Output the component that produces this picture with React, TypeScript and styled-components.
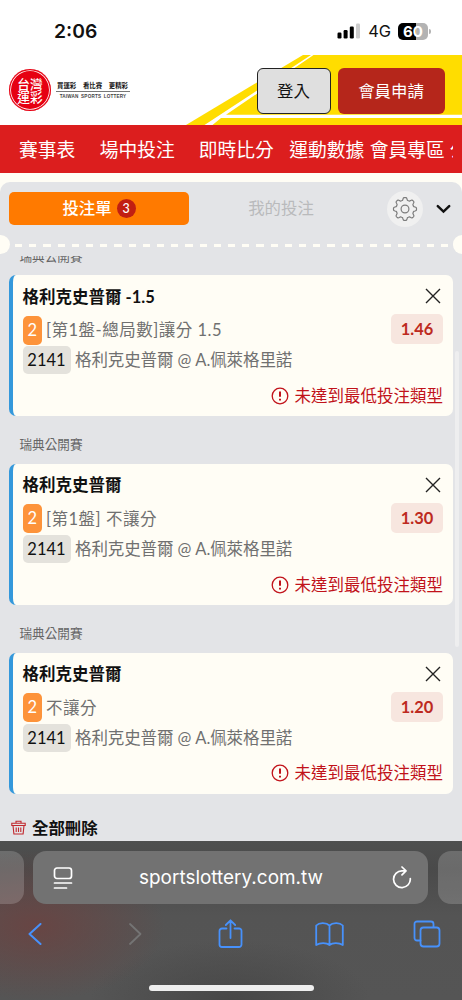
import React from "react";
import styled, { createGlobalStyle } from "styled-components";

const GlobalStyle = createGlobalStyle`
  * { box-sizing: border-box; }
  body {
    margin: 0;
    background: #fffdf5;
    font-family: Lato, "Noto Sans CJK TC", sans-serif;
    color: #111;
  }
  button { font: inherit; color: inherit; border: 0; padding: 0; background: none; }
  svg { display: block; flex: none; }
`;

const Screen = styled.div`
  width: 462px;
  height: 1000px;
  display: flex;
  flex-direction: column;
  overflow: hidden;
`;

const StatusBar = styled.div`
  height: 55px;
  flex: none;
  background: #fff;
  display: flex;
  align-items: center;
  justify-content: space-between;
  padding: 7px 31px 0 54px;
  font-family: Inter, sans-serif;
`;

const Clock = styled.div`
  font-size: 19.3px;
  font-weight: 600;
`;

const StatusIcons = styled.div`
  display: flex;
  align-items: center;
`;

const Network = styled.span`
  font-size: 16.4px;
  margin: 0 7px 0 7px;
`;

const Battery = styled.div`
  width: 30px;
  height: 17px;
  border-radius: 5px;
  background: linear-gradient(90deg, #000 60%, #b3b3b3 60%);
  color: #fff;
  font-size: 15px;
  font-weight: 700;
  line-height: 17px;
  text-align: center;
`;

const BatteryTip = styled.div`
  width: 2px;
  height: 5px;
  margin-left: 1px;
  border-radius: 0 2px 2px 0;
  background: #b3b3b3;
`;

const Header = styled.header`
  position: relative;
  height: 70px;
  flex: none;
  background: #fff;
  display: flex;
  align-items: center;
  padding: 0 17.5px 0 9px;
`;

const Stripes = styled.svg`
  position: absolute;
  right: 0;
  top: 0;
`;

const Emblem = styled.div`
  width: 42px;
  height: 42px;
  flex: none;
  border-radius: 50%;
  background: #e60012;
  box-shadow: inset 0 0 0 1.2px #e60012, inset 0 0 0 2px #fff;
  color: #fff;
  display: flex;
  flex-direction: column;
  align-items: center;
  justify-content: center;
  font-family: "Noto Sans CJK TC", sans-serif;
  font-size: 12.7px;
  line-height: 13px;
  font-weight: 500;
`;

const Slogan = styled.div`
  width: 74px;
  margin-left: 5px;
  text-align: center;
  white-space: nowrap;
`;

const SloganTop = styled.div`
  display: flex;
  justify-content: space-between;
  padding: 0 2px 0 1px;
  font-size: 6.4px;
  line-height: 11px;
  font-weight: 700;
  border-bottom: 1px solid #777;
`;

const SloganBottom = styled.div`
  font-family: "Liberation Sans", sans-serif;
  font-size: 4.6px;
  line-height: 9px;
  letter-spacing: 0.2px;
  word-spacing: 1px;
  font-weight: 700;
  color: #444;
`;

const HeaderActions = styled.div`
  position: relative;
  display: flex;
  gap: 7px;
  margin: 1px 0 0 auto;
`;

const HeaderButton = styled.button<{ $primary?: boolean }>`
  width: ${(p) => (p.$primary ? "107px" : "74px")};
  height: 46px;
  padding-bottom: 2px;
  border-radius: 6px;
  border: ${(p) => (p.$primary ? "0" : "1.3px solid #222")};
  background: ${(p) => (p.$primary ? "#b5261b" : "#dfdfdf")};
  color: ${(p) => (p.$primary ? "#fff" : "#111")};
  font-size: 16.4px;
`;

const Nav = styled.nav`
  height: 48px;
  flex: none;
  background: #dc1e1e;
  display: flex;
  align-items: center;
  margin-bottom: 9px;
  padding: 2px 9px 0 19px;
`;

const NavTrack = styled.div`
  display: flex;
  overflow: hidden;
  white-space: nowrap;
`;

const NavItem = styled.a<{ $gap: number }>`
  flex: none;
  margin-right: ${(p) => p.$gap}px;
  font-size: 18.75px;
  line-height: 28px;
  color: #fff;
`;

const Panel = styled.main`
  height: 659px;
  flex: none;
  border-radius: 10px 10px 0 0;
  background: #e3e4e7;
  display: flex;
  flex-direction: column;
  overflow: hidden;
`;

const Tabs = styled.div`
  height: 53px;
  flex: none;
  display: flex;
  align-items: center;
  padding: 0 10px 0 9px;
`;

const Tab = styled.button<{ $active?: boolean }>`
  width: ${(p) => (p.$active ? "180px" : "184px")};
  height: 33px;
  padding-bottom: 1px;
  border-radius: 5px;
  background: ${(p) => (p.$active ? "#ff7a00" : "transparent")};
  color: ${(p) => (p.$active ? "#fff" : "#b9babc")};
  font-size: 16.4px;
  font-weight: ${(p) => (p.$active ? 500 : 400)};
  line-height: 22px;
  display: flex;
  align-items: center;
  justify-content: center;
  gap: 5px;
`;

const Count = styled.span`
  width: 19px;
  height: 19px;
  margin-top: 1px;
  border-radius: 50%;
  background: #c11f12;
  font-size: 12.5px;
  line-height: 19px;
`;

const Settings = styled.button`
  width: 36px;
  height: 36px;
  margin: 0 13px 0 14px;
  border-radius: 50%;
  background: #f0f0f0;
  display: flex;
  align-items: center;
  justify-content: center;
`;

const Perforation = styled.div`
  height: 21px;
  flex: none;
  display: flex;
  align-items: center;
  justify-content: space-between;
`;

const Notch = styled.div<{ $right?: boolean }>`
  width: 9.5px;
  height: 19px;
  margin-top: -2px;
  border-radius: ${(p) => (p.$right ? "10px 0 0 10px" : "0 10px 10px 0")};
  background: #fffdf5;
`;

const Dashes = styled.div`
  width: 434px;
  height: 2.4px;
  margin: 0 auto 0 5px;
  background: repeating-linear-gradient(90deg, #fffdf5 0 7.2px, transparent 7.2px 14.2px);
`;

const ScrollArea = styled.div`
  position: relative;
  flex: 1;
  overflow: hidden;
`;

const ScrollThumb = styled.div`
  position: absolute;
  right: 3px;
  top: 95px;
  width: 4px;
  height: 296px;
  border-radius: 2px;
  background: #eeeeef;
`;

const List = styled.div`
  margin-top: -28.5px;
  padding: 0 9px;
`;

const League = styled.div`
  height: 47.5px;
  padding: 10px 0 0 10.5px;
  font-size: 12.6px;
  line-height: 37px;
  color: #666;
`;

const Card = styled.article`
  height: 141.25px;
  display: flex;
  flex-direction: column;
  padding: 9px 10px 8.5px 9.5px;
  border-left: 4px solid #3498db;
  border-radius: 7px;
  background: #fffdf5;
`;

const TitleRow = styled.div`
  height: 23px;
  display: flex;
  align-items: center;
  justify-content: space-between;
  padding-right: 2px;
  font-size: 16.5px;
  font-weight: 700;
  color: #111;

  svg { margin-top: 1px; }
`;

const DetailRow = styled.div<{ $height: number }>`
  height: ${(p) => p.$height}px;
  flex: none;
  display: flex;
  align-items: center;
  font-size: 16.5px;
  line-height: 28px;
  white-space: nowrap;
  color: #707070;
`;

const PickTag = styled.span`
  width: 19.5px;
  height: 29px;
  margin-right: 4px;
  border-radius: 5px;
  background: #fd933a;
  color: #fff;
  text-align: center;
`;

const Detail = styled.span<{ $spacing: number }>`
  letter-spacing: ${(p) => p.$spacing}px;
`;

const CodeTag = styled.span`
  width: 48px;
  height: 28px;
  margin-right: 4.5px;
  border-radius: 5px;
  background: #e4e2dc;
  color: #111;
  text-align: center;
`;

const Odds = styled.span`
  width: 52px;
  height: 30px;
  margin: -2px 0 0 auto;
  border-radius: 5px;
  background: #f7e6df;
  color: #bd2a20;
  font-size: 16.4px;
  font-weight: 700;
  line-height: 30px;
  text-align: center;
`;

const Warning = styled.div`
  display: flex;
  align-items: center;
  justify-content: flex-end;
  gap: 6px;
  margin-top: auto;
  font-size: 16.5px;
  line-height: 24px;
  color: #c1121a;
`;

const DeleteAll = styled.button`
  display: flex;
  align-items: center;
  gap: 6px;
  margin: 22px 0 0 2px;
  font-size: 16.4px;
  line-height: 24px;
  font-weight: 700;
  color: #111;
`;

const BrowserBar = styled.footer`
  flex: 1;
  background:
    radial-gradient(ellipse 130px 75px at 35px 85px, rgba(110, 64, 62, 0.75), rgba(110, 64, 62, 0)),
    radial-gradient(ellipse 140px 60px at 230px 159px, rgba(68, 68, 68, 0.8), rgba(68, 68, 68, 0)),
    linear-gradient(#4e4f4f 0, #4a4a4a 28px, #545454 75px, #555 100%);
  display: flex;
  flex-direction: column;
  align-items: center;
`;

const AddressRow = styled.div`
  width: 462px;
  height: 64px;
  padding: 10px 1px 0 0;
  display: flex;
  gap: 9.5px;
  justify-content: center;
`;

const NeighborTab = styled.div`
  width: 47px;
  height: 53px;
  flex: none;
  border-radius: 13px;
  background: rgba(255, 255, 255, 0.18);
`;

const Address = styled.div`
  width: 395px;
  height: 53px;
  flex: none;
  border-radius: 13px;
  background: #727272;
  display: flex;
  align-items: center;
  justify-content: space-between;
  padding: 0 16px 0 20px;
  font-family: Inter, sans-serif;
  font-size: 18.9px;
  letter-spacing: 0.02px;
  color: #fff;
`;

const AddressText = styled.span`
  margin-left: -3px;
`;

const Toolbar = styled.div`
  width: 491px;
  flex: none;
  display: grid;
  grid-template-columns: repeat(5, 1fr);
  align-items: center;
  justify-items: center;
  padding: 14px 0 0;
`;

const HomeIndicator = styled.div`
  width: 165px;
  height: 6px;
  margin: auto 0 9.5px;
  border-radius: 3px;
  background: #eee;
`;

const gearPath = Array.from({ length: 97 }, (_, i) => {
  const angle = (i / 96) * Math.PI * 2;
  const radius = 10.2 + Math.tanh(2.2 * Math.cos(angle * 8)) * 1.35;
  const x = 13 + radius * Math.sin(angle);
  const y = 13 - radius * Math.cos(angle);
  return `${i ? "L" : "M"}${x.toFixed(2)} ${y.toFixed(2)}`;
}).join("");

const navItems = [
  { label: "賽事表", gap: 24.5 },
  { label: "場中投注", gap: 24 },
  { label: "即時比分", gap: 15.5 },
  { label: "運動數據", gap: 5.5 },
  { label: "會員專區", gap: 5 },
  { label: "公", gap: 0 },
];

const bets = [
  { title: "格利克史普爾 -1.5", detail: "[第1盤-總局數]讓分 1.5", odds: "1.46" },
  { title: "格利克史普爾", detail: "[第1盤] 不讓分", odds: "1.30" },
  { title: "格利克史普爾", detail: "不讓分", odds: "1.20" },
];

const blue = { fill: "none", stroke: "#4791fb", strokeWidth: 1.8, strokeLinecap: "round", strokeLinejoin: "round" } as const;

export default function App() {
  return (
    <Screen>
      <GlobalStyle />
      <StatusBar>
        <Clock>2:06</Clock>
        <StatusIcons>
          <svg width="24" height="16" viewBox="0 0 24 16">
            <rect x="0.5" y="9.5" width="4" height="6" rx="1.2" />
            <rect x="6.6" y="7" width="4" height="8.5" rx="1.2" />
            <rect x="12.8" y="3.5" width="4" height="12" rx="1.2" />
            <rect x="19" y="0.5" width="4" height="15" rx="1.2" fill="#ccc" />
          </svg>
          <Network>4G</Network>
          <Battery>60</Battery>
          <BatteryTip />
        </StatusIcons>
      </StatusBar>

      <Header>
        <Stripes width="276" height="70" viewBox="186 55 276 70">
          <path d="M186 125 303 55H462V125Z" fill="#ffdd00" />
          <path d="M204.5 125 311 55h2.5L226 114.8H462v3.3H221L212.500 125Z" fill="#fff" />
        </Stripes>
        <Emblem>
          <span>台灣</span>
          <span>運彩</span>
        </Emblem>
        <Slogan>
          <SloganTop>
            <span>買運彩</span>
            <span>看比賽</span>
            <span>更精彩</span>
          </SloganTop>
          <SloganBottom>TAIWAN SPORTS LOTTERY</SloganBottom>
        </Slogan>
        <HeaderActions>
          <HeaderButton>登入</HeaderButton>
          <HeaderButton $primary>會員申請</HeaderButton>
        </HeaderActions>
      </Header>

      <Nav>
        <NavTrack>
          {navItems.map((item) => (
            <NavItem key={item.label} $gap={item.gap}>{item.label}</NavItem>
          ))}
        </NavTrack>
      </Nav>

      <Panel>
        <Tabs>
          <Tab $active>投注單<Count>3</Count></Tab>
          <Tab>我的投注</Tab>
          <Settings>
            <svg width="26" height="26" viewBox="0 0 26 26" fill="none" stroke="#7c7c7c" strokeWidth="1.2" strokeLinejoin="round">
              <path d={gearPath} />
              <circle cx="13" cy="13" r="3.9" />
            </svg>
          </Settings>
          <svg width="15" height="10" viewBox="0 0 15 10" fill="none" stroke="#111" strokeWidth="2.5" strokeLinecap="round">
            <path d="M1.8 2.2 7.5 7.6 13.2 2.2" />
          </svg>
        </Tabs>
        <Perforation>
          <Notch />
          <Dashes />
          <Notch $right />
        </Perforation>

        <ScrollArea>
          <List>
            {bets.map((bet) => (
              <React.Fragment key={bet.odds}>
                <League>瑞典公開賽</League>
                <Card>
                  <TitleRow>
                    {bet.title}
                    <svg width="16" height="16" viewBox="0 0 16 16" fill="none" stroke="#222" strokeWidth="1.4">
                      <path d="M1 1 15 15M15 1 1 15" />
                    </svg>
                  </TitleRow>
                  <DetailRow $height={46}>
                    <PickTag>2</PickTag>
                    <Detail $spacing={0.5}>{bet.detail}</Detail>
                    <Odds>{bet.odds}</Odds>
                  </DetailRow>
                  <DetailRow $height={14}>
                    <CodeTag>2141</CodeTag>
                    <Detail $spacing={-0.1}>格利克史普爾 @ A.佩萊格里諾</Detail>
                  </DetailRow>
                  <Warning>
                    <svg width="18" height="18" viewBox="0 0 18 18" fill="none" stroke="#c1121a" strokeWidth="1.3">
                      <circle cx="9" cy="9" r="7.8" />
                      <path d="M9 4.5v5.3M9 11.7v1.9" strokeWidth="2" />
                    </svg>
                    未達到最低投注類型
                  </Warning>
                </Card>
              </React.Fragment>
            ))}
            <DeleteAll>
              <svg width="15" height="15" viewBox="0 0 15 15" fill="none" stroke="#c1272d" strokeWidth="1.1">
                <path d="M.8 3.300h13.400v2.200H.8ZM5 3.300V1.200h5v2.100M2 5.500 2.900 14h9.200L13 5.500M5.200 7.500V12M7.500 7.500V12M9.800 7.500V12" />
              </svg>
              全部刪除
            </DeleteAll>
          </List>
          <ScrollThumb />
        </ScrollArea>
      </Panel>

      <BrowserBar>
        <AddressRow>
          <NeighborTab />
          <Address>
            <svg width="20" height="24" viewBox="0 0 20 24" fill="none" stroke="#fff" strokeWidth="1.7" strokeLinecap="round">
              <rect x="1.5" y="2" width="17" height="10.5" rx="2.5" />
              <path d="M1.5 17h17M1.5 22h12" />
            </svg>
            <AddressText>sportslottery.com.tw</AddressText>
            <svg width="20" height="24" viewBox="0 0 20 24" fill="none" stroke="#fff" strokeWidth="1.7" strokeLinecap="round" strokeLinejoin="round">
              <path d="M18.3 12.600A8.400 8.400 0 1 1 10 4.800h3.500M10 1l4 3.900-4 4" />
            </svg>
          </Address>
          <NeighborTab />
        </AddressRow>
        <Toolbar>
          <svg width="14" height="22" viewBox="0 0 14 22" {...blue} strokeWidth={2}>
            <path d="M12.5 1 1.5 11l11 10" />
          </svg>
          <svg width="18" height="22" viewBox="0 0 18 22" {...blue} stroke="#747474">
            <path d="M6 1 16.500 11 6 21" />
          </svg>
          <svg width="25" height="30" viewBox="0 0 25 30" {...blue}>
            <path d="M8.5 9.5H4A2.5 2.5 0 0 0 1.5 12v13.5A2.5 2.5 0 0 0 4 28h17a2.5 2.5 0 0 0 2.5-2.5V12A2.5 2.5 0 0 0 21 9.5h-4.500M12.500 19V1.500M7.800 6l4.700-4.700L17.200 6" />
          </svg>
          <svg width="29" height="26" viewBox="0 0 29 26" {...blue}>
            <path d="M14.500 4.500C11.500 1.500 4.500 1 1.200 4.500V24C5 21.500 11.500 21.500 14.500 24 17.500 21.500 24 21.500 27.800 24V4.500C24.500 1 17.500 1.500 14.500 4.500V24" />
          </svg>
          <svg width="28" height="28" viewBox="0 0 28 28" {...blue}>
            <path d="M7.500 20.500H4A2.500 2.500 0 0 1 1.500 18V4A2.500 2.500 0 0 1 4 1.500h14A2.500 2.500 0 0 1 20.500 4v3" />
            <rect x="7.500" y="7.500" width="19" height="19" rx="3" />
          </svg>
        </Toolbar>
        <HomeIndicator />
      </BrowserBar>
    </Screen>
  );
}
